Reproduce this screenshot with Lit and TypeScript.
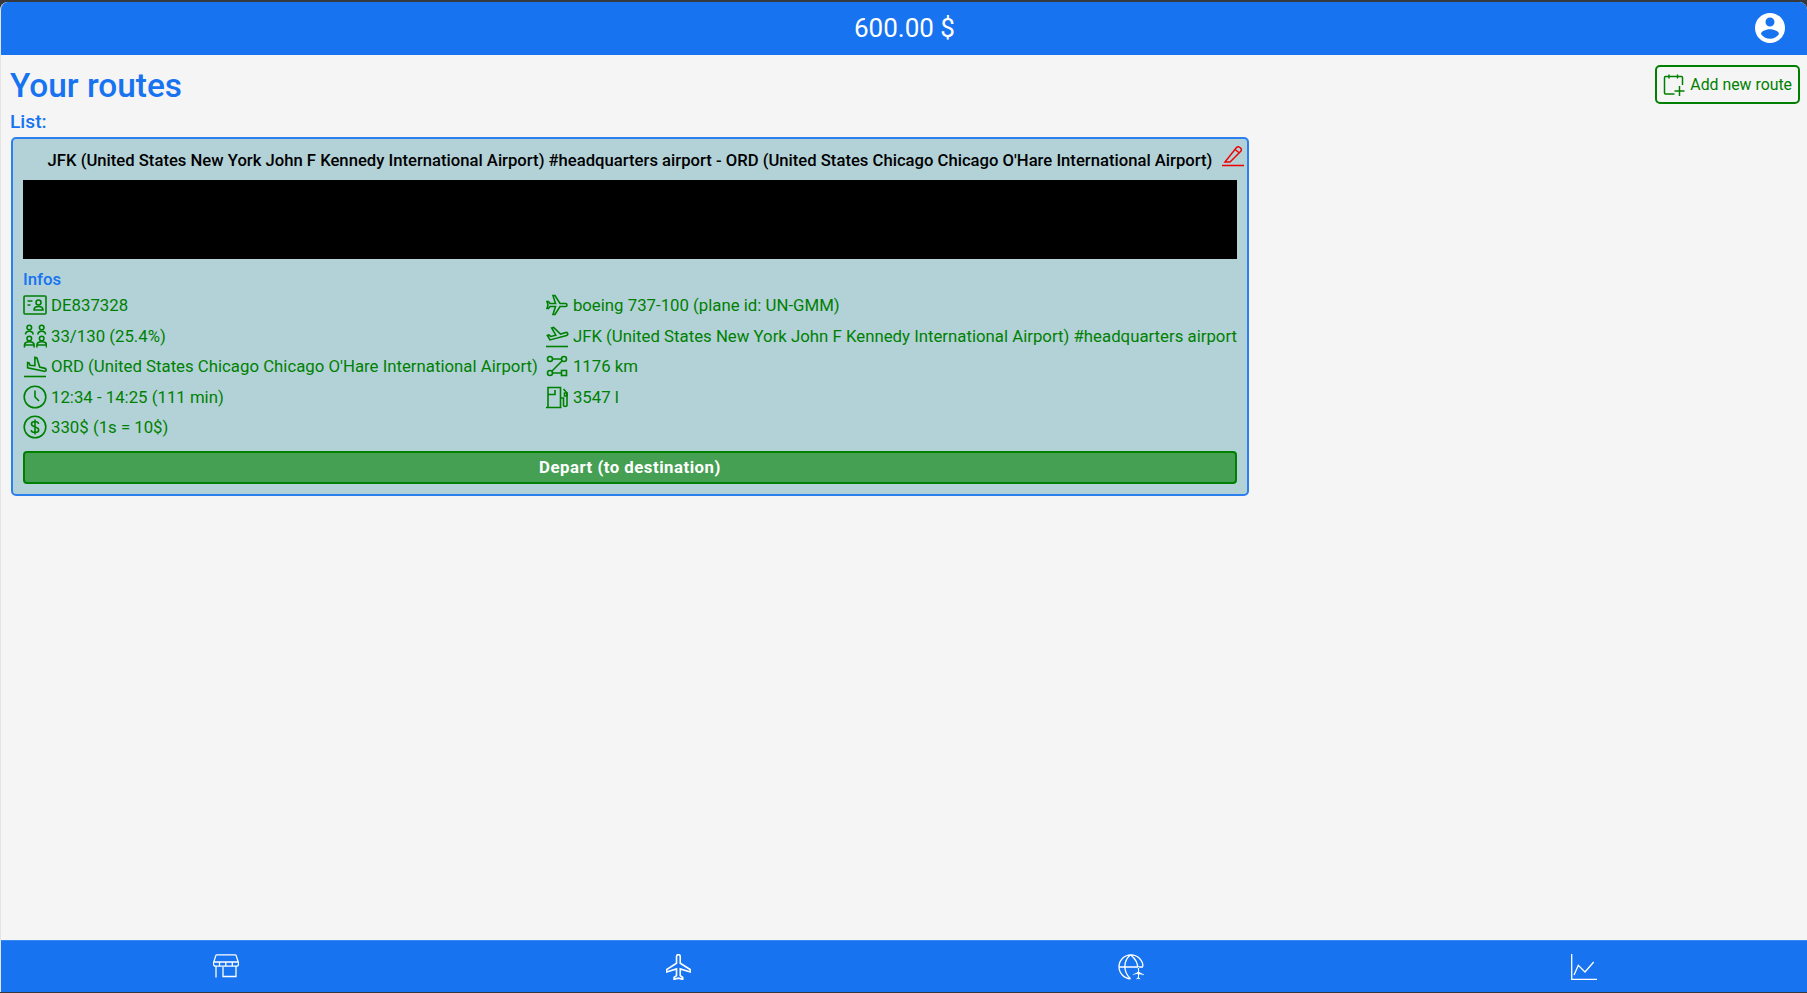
import { LitElement, html, css, svg } from "lit";
import { customElement } from "lit/decorators.js";

const FLIGHT = "M21 16v-2l-8-5V3.5c0-.83-.67-1.5-1.5-1.5S10 2.67 10 3.5V9l-8 5v2l8-2.5V19l-2 1.5V22l3.5-1 3.5 1v-1.5L13 19v-5.5l8 2.5z";
const icons: Record<string, unknown> = {
  vcard: svg`<rect x="1" y="3" width="22" height="18" rx="1"/><path d="M4.5 8h5M4.5 12h3"/><circle cx="15.5" cy="9.5" r="2.5"/><path d="M11 17c0-2.4 2-3.5 4.5-3.5S20 14.6 20 17z"/>`,
  people: svg`<circle cx="6.300" cy="3.500" r="2.300"/><circle cx="18.700" cy="3.500" r="2.300"/><path d="M2.500 10.500c0-2 1.700-3.300 3.800-3.300s3.800 1.300 3.800 3.300M14.900 10.500c0-2 1.700-3.300 3.800-3.300s3.800 1.300 3.800 3.300"/><circle cx="6.300" cy="14.500" r="2.300"/><circle cx="18.700" cy="14.500" r="2.300"/><path d="M1.500 23.500v-2.500c0-2 2.200-3.300 4.800-3.300s4.800 1.300 4.800 3.300v2.500M13.900 23.500v-2.500c0-2 2.200-3.300 4.800-3.300s4.800 1.300 4.800 3.300v2.500M1.500 21h9.600M13.900 21h9.600"/>`,
  land: svg`<path d="M1 22.500h22"/><path d="M21.300 17.300c.8.2 1.600-.3 1.800-1.100.2-.8-.3-1.600-1.100-1.800l-5.300-1.400-2.800-9-2-.6v8.300L7 11.300l-.9-2.300-1.500-.4v5.200z"/>`,
  takeoff: svg`<path d="M1 22.500h22"/><path d="M22.600 9.600c-.2-.8-1-1.300-1.800-1.100L15.500 10 8.600 3.500l-1.900.5 4.100 7.200-5 1.300-2-1.500-1.400.4 2.600 4.500s7.100-1.900 16.600-4.400c.8-.2 1.300-1.100 1.100-1.900z"/>`,
  plane: svg`<path transform="rotate(90 12 12) translate(.5 0)" d="${FLIGHT}"/>`,
  route: svg`<circle cx="5" cy="5" r="2.500"/><circle cx="19" cy="5" r="2.500"/><circle cx="5" cy="19" r="2.500"/><rect x="16.500" y="16.500" width="5" height="5"/><path d="M7.500 5h9M17.200 6.800 6.800 17.200M7.500 19h9"/>`,
  clock: svg`<circle cx="12" cy="12" r="10.800"/><path d="M12 5.500V12l4 4"/>`,
  gas: svg`<path d="M3 22V2.500h12.500V22M1 22.500h15.500"/><path d="M3 9.500h7V5M15.500 13h3v7.500c0 1.200 3.500 1.200 3.500 0V8l-3.500-4"/><path d="M19.500 8h2.500v3h-2.500z"/>`,
  dollar: svg`<circle cx="12" cy="12" r="10.800"/><path d="M15.500 9c0-1.600-1.500-2.500-3.500-2.500S8.500 7.400 8.500 9c0 3.800 7.200 2.200 7.200 6 0 1.600-1.700 2.500-3.700 2.500s-3.700-.9-3.700-2.500M12 4.500v15"/>`,
};

@customElement("icon-glyph")
class IconGlyph extends LitElement {
  static properties = { name: {} };
  name = "";
  static styles = css`
    :host { display: block; width: 24px; height: 24px; }
    svg { display: block; width: 24px; height: 24px; fill: none; stroke: currentColor; stroke-width: 1.6; }
  `;
  render() {
    return html`<svg viewBox="0 0 24 24">${icons[this.name]}</svg>`;
  }
}

@customElement("app-root")
class AppRoot extends LitElement {
  static styles = css`
    :host { display: block; height: 993px; background: #35393d; font-family: Roboto, "Liberation Sans", sans-serif; overflow: hidden; }
    .app { height: 990px; margin-top: 2px; display: flex; flex-direction: column; background: #f5f5f5; border-radius: 8px 8px 0 0; overflow: hidden; border-left: 1px solid #e4e4e4; }
    header { flex: none; height: 53px; margin-left: -1px; background: #1773f0; color: #fff; position: relative; display: flex; align-items: center; justify-content: center; font-size: 26px; padding-left: 2px; padding-bottom: 1px; box-sizing: border-box; }
    .profile { position: absolute; right: 19px; top: 8px; width: 36px; height: 36px; fill: #fff; display: block; }
    main { flex: 1; padding: 0 7px 0 9px; min-height: 0; }
    .top { display: flex; justify-content: space-between; align-items: flex-start; }
    h1 { margin: 12px 0 0; font-size: 33.4px; line-height: 38px; font-weight: 500; color: #1773f0; }
    .add { margin-top: 10px; height: 39px; box-sizing: border-box; display: flex; align-items: center; gap: 5px; padding: 0 6px; border: 2px solid #008000; border-radius: 5px; color: #008000; font-size: 15.85px; }
    .add svg { width: 22px; height: 22px; fill: none; stroke: #008000; stroke-width: 1.5; display: block; }
    .list { margin-top: 6px; font-size: 19.2px; line-height: 22px; font-weight: 500; color: #1773f0; }
    .card { box-sizing: border-box; width: 1238px; margin: 4px 0 0 1px; height: 359px; border: 2px solid #2c7fee; border-radius: 5px; background: #b2d2d8; padding: 0 10px 10px; display: flex; flex-direction: column; }
    .title { height: 41px; flex: none; box-sizing: border-box; padding-top: 1px; display: flex; align-items: center; justify-content: center; font-size: 16.65px; font-weight: 500; color: #000; position: relative; white-space: nowrap; }
    .title svg { position: absolute; right: -7px; top: 6px; width: 22px; height: 22px; fill: none; stroke: #f00000; stroke-width: 1.4; display: block; }
    .black { flex: none; height: 79px; background: #000; }
    .infos { margin-top: 10px; font-size: 16.8px; line-height: 20px; font-weight: 500; color: #1773f0; }
    .grid { display: grid; grid-template-columns: auto auto; justify-content: space-between; grid-auto-rows: 30.5px; margin-top: 1px; align-items: center; color: #008000; }
    .row { display: flex; align-items: center; gap: 4px; font-size: 16.8px; white-space: nowrap; }
    .depart { flex: none; margin-top: auto; height: 33px; box-sizing: border-box; border: 2px solid #008000; border-radius: 4px; background: #45a053; color: #fff; font-size: 16.8px; font-weight: 700; display: flex; align-items: center; justify-content: center; letter-spacing: .5px; padding-bottom: 1px; }
    footer { flex: none; height: 52px; margin-left: -1px; background: #1773f0; border-top: 1px solid #3b88f2; box-sizing: border-box; display: grid; grid-template-columns: repeat(4, 452.5px); justify-content: start; align-items: center; justify-items: center; color: #fff; }
    footer svg { width: 26px; height: 26px; fill: none; stroke: #fff; stroke-width: 1.3; display: block; margin-top: 1px; }
  `;

  row(icon: string, text: string) {
    return html`<div class="row"><icon-glyph .name=${icon}></icon-glyph><span>${text}</span></div>`;
  }

  render() {
    return html`<div class="app">
      <header>
        600.00 $
        <svg class="profile" viewBox="0 0 24 24"><path d="M12 2C6.48 2 2 6.48 2 12s4.480 10 10 10 10-4.480 10-10S17.520 2 12 2zm0 3c1.660 0 3 1.340 3 3s-1.340 3-3 3-3-1.340-3-3 1.340-3 3-3zm0 14.200c-2.500 0-4.710-1.280-6-3.220.03-1.990 4-3.080 6-3.080 1.990 0 5.970 1.090 6 3.080-1.290 1.940-3.500 3.220-6 3.220z"/></svg>
      </header>
      <main>
        <div class="top">
          <h1>Your routes</h1>
          <div class="add">
            <svg viewBox="0 0 22 22"><path d="M4 2.500h14.500c.6 0 1 .4 1 1v7.500M1.500 5v14c0 .6.4 1 1 1h9M1.500 5V3.500c0-.6.4-1 1-1H4M6 .5v4M14.500 .5v4M16.500 12v10M11.500 17h10"/></svg>
            <span>Add new route</span>
          </div>
        </div>
        <div class="list">List:</div>
        <div class="card">
          <div class="title">
            <span>JFK (United States New York John F Kennedy International Airport) #headquarters airport - ORD (United States Chicago Chicago O'Hare International Airport)</span>
            <svg viewBox="0 0 22 22"><path d="M0 20.500h22"/><path d="M3 17 14.500 2.500c1-1 2-1 3.500 0 1.500 1 1.700 2.300 1 3.500L8 17H3z M13 4.500l4.500 3.500"/></svg>
          </div>
          <div class="black"></div>
          <div class="infos">Infos</div>
          <div class="grid">
            ${this.row("vcard", "DE837328")}
            ${this.row("plane", "boeing 737-100 (plane id: UN-GMM)")}
            ${this.row("people", "33/130 (25.4%)")}
            ${this.row("takeoff", "JFK (United States New York John F Kennedy International Airport) #headquarters airport")}
            ${this.row("land", "ORD (United States Chicago Chicago O'Hare International Airport)")}
            ${this.row("route", "1176 km")}
            ${this.row("clock", "12:34 - 14:25 (111 min)")}
            ${this.row("gas", "3547 l")}
            ${this.row("dollar", "330$ (1s = 10$)")}
          </div>
          <div class="depart">Depart (to destination)</div>
        </div>
      </main>
      <footer>
        <svg viewBox="0 0 26 26"><path d="M4 .8h18c.6 0 1 .3 1.200.8l2.300 7.200v1.200c0 1.200-.8 2.200-2 2.200H2.500c-1.200 0-2-1-2-2.200V8.800l2.300-7.200C3 1.100 3.400.8 4 .8zM.5 8h25M6.500 8v4M12.800 8v4M19.300 8v4M3 12.200V23.500M10 13v9.500h13V12.200"/></svg>
        <svg viewBox="1.500 1.500 21 21"><path d="${FLIGHT}"/></svg>
        <svg viewBox="0 0 26 26"><path d="M25 12.500A12 12 0 1 0 12.500 24.800M1 13h24M12.500 .8C5 7 5 18 12.500 24.800M12.500 .8C19 6 20 11 19.800 15"/><path fill="#fff" stroke="#1773f0" stroke-width="1" d="M26.500 21.500v-1.300l-5-2.500v-3c0-.7-.4-1.200-1-1.200s-1 .5-1 1.200v3l-5 2.500v1.300l5-1.200v3l-1.500 1V26l2.500-.7 2.500.7v-1.200l-1.500-1v-3z"/></svg>
        <svg viewBox="0 0 26 26"><path d="M.7 0v25.300H26M3 21l4.300-9.700 6.700 6.700L22.700 8"/></svg>
      </footer>
    </div>`;
  }
}
void IconGlyph; void AppRoot;
